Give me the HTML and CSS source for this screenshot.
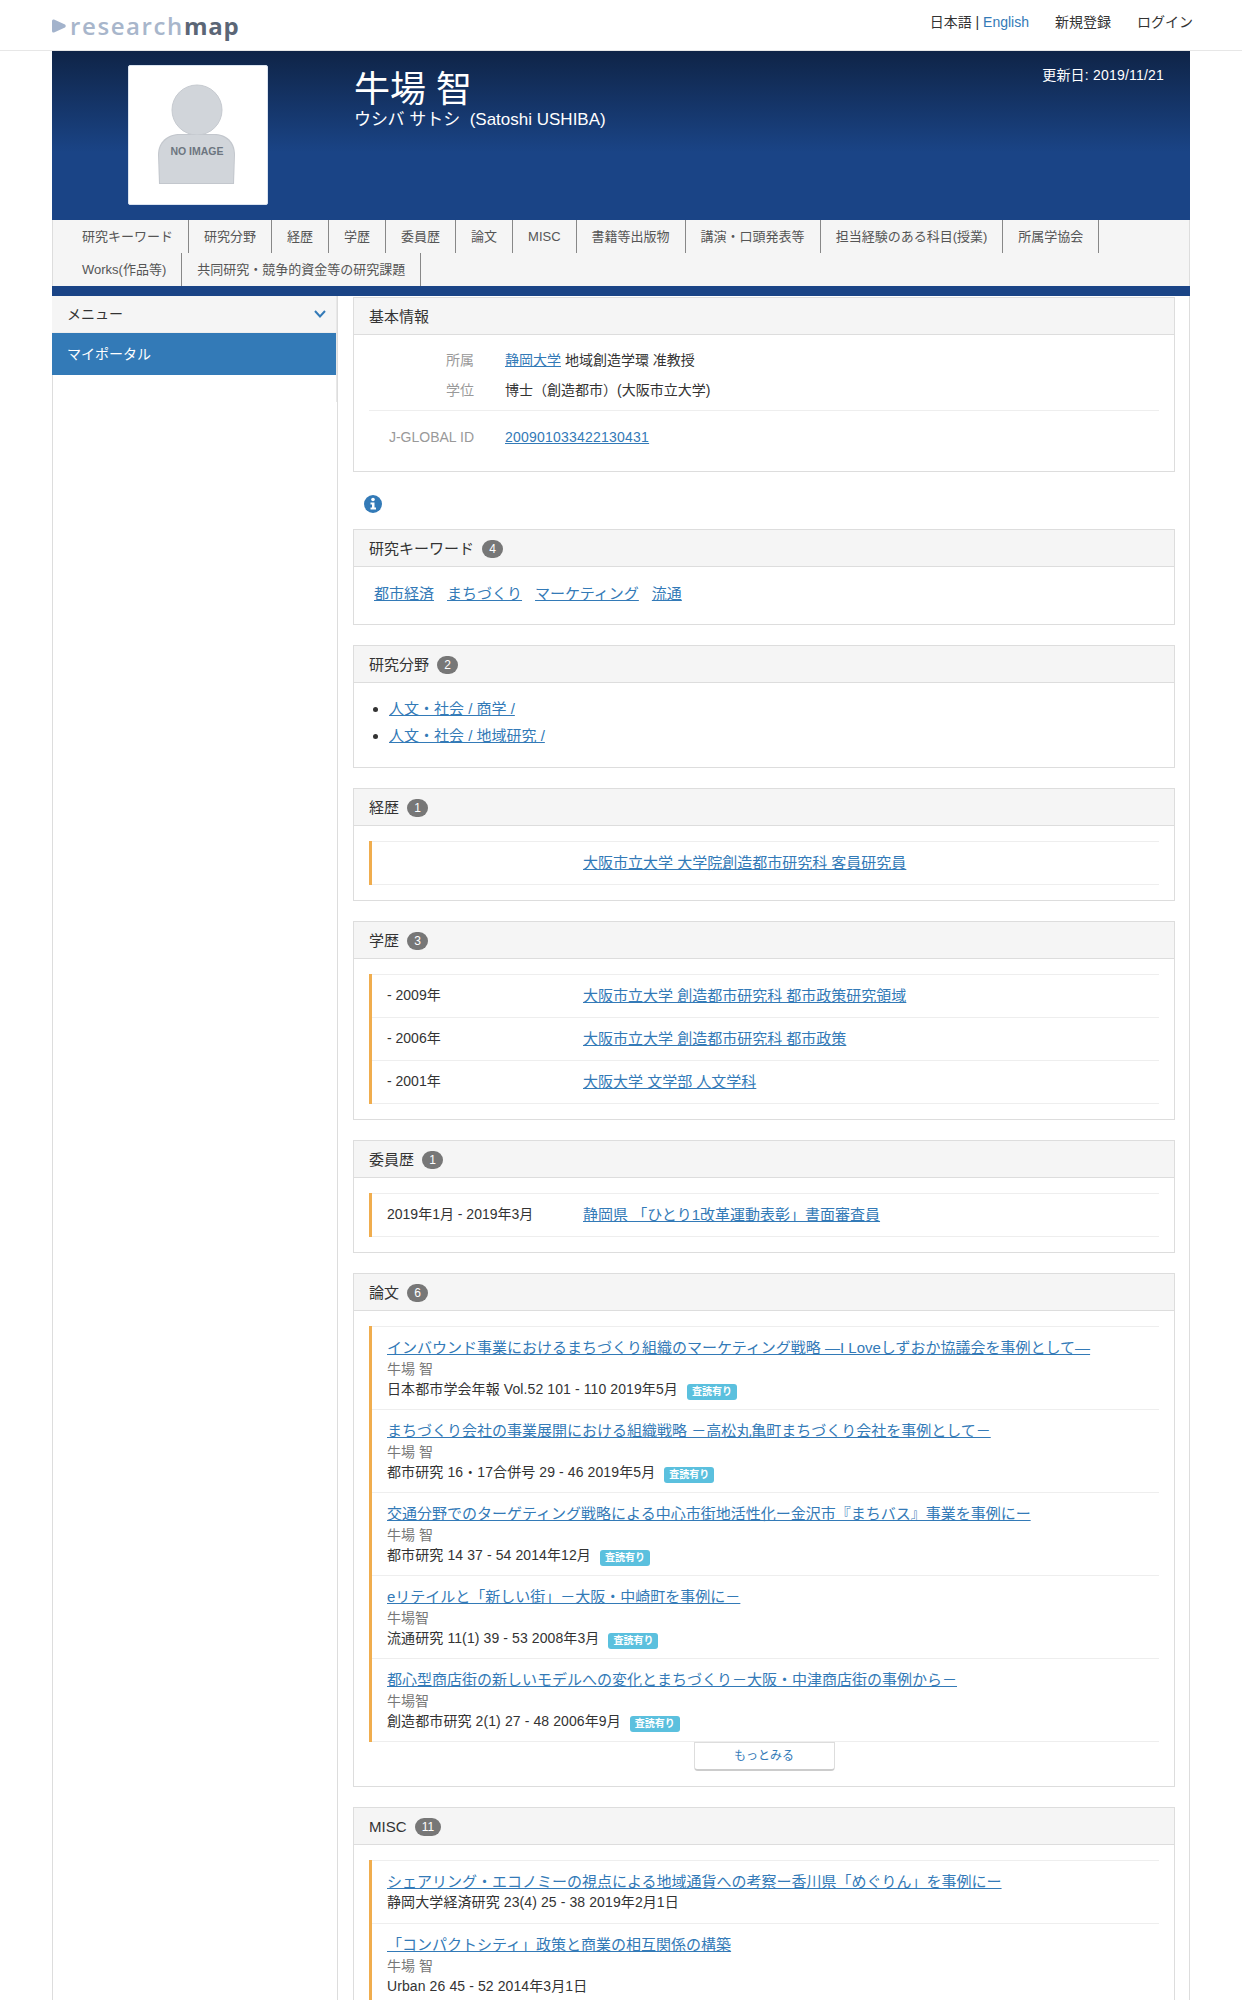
FILE: index.html
```html
<!DOCTYPE html>
<html lang="ja">
<head>
<meta charset="utf-8">
<title>牛場 智 - researchmap</title>
<link rel="stylesheet" href="styles.css">
</head>
<body>
<header class="topbar">
  <a class="logo" href="#">
    <svg class="logo-mark" width="14" height="14" viewBox="0 0 14 14"><path d="M2 0.5 L13 5.5 Q14.5 7 13 8.500 L2 13.500 Q0 14 0 12 V2 Q0 0 2 0.500 Z" fill="#a3b3cc"/></svg>
    <span class="logo-light">research</span><span class="logo-dark">map</span>
  </a>
  <nav class="topnav">
    <span>日本語 | <a href="#">English</a></span>
    <span>新規登録</span>
    <span>ログイン</span>
  </nav>
</header>
<div class="wrap">
  <section class="hero">
    <div class="photo">
      <svg width="138" height="138" viewBox="0 0 138 138">
        <path class="sil" d="M30 118 L29 89 C29 75 39 68 51 68 H85 C97 68 106 75 106 89 L105 118 Z"/>
        <circle class="sil-head" cx="68" cy="44" r="25"/>
        <path class="sil-fill" d="M31 117 L30 89 C30 76 40 69 51 69 H85 C96 69 105 76 105 89 L104 117 Z"/>
        <text x="68" y="89" class="noimg" text-anchor="middle">NO IMAGE</text>
      </svg>
    </div>
    <div class="names">
      <h1>牛場 智</h1>
      <p>ウシバ サトシ&nbsp; (Satoshi USHIBA)</p>
    </div>
    <div class="updated">更新日: 2019/11/21</div>
  </section>
  <ul class="tabs">
    <li>研究キーワード</li><li>研究分野</li><li>経歴</li><li>学歴</li><li>委員歴</li><li>論文</li><li>MISC</li><li>書籍等出版物</li><li>講演・口頭発表等</li><li>担当経験のある科目(授業)</li><li>所属学協会</li><li>Works(作品等)</li><li>共同研究・競争的資金等の研究課題</li>
  </ul>
  <div class="bluebar"></div>
  <div class="columns">
    <aside class="side">
      <div class="side-inner">
        <div class="side-head">メニュー
          <svg width="12" height="8" viewBox="0 0 12 8"><path d="M1 1 L6 6.500 L11 1" fill="none" stroke="#337ab7" stroke-width="2"/></svg>
        </div>
        <div class="side-active">マイポータル</div>
      </div>
    </aside>
    <main class="main">
      <section class="panel">
        <h2 class="panel-head">基本情報</h2>
        <div class="info">
          <dl class="info-grid">
            <dt>所属</dt><dd><a href="#">静岡大学</a> 地域創造学環 准教授</dd>
            <dt>学位</dt><dd>博士（創造都市）(大阪市立大学)</dd>
          </dl>
          <dl class="info-grid info-ruled">
            <dt>J-GLOBAL ID</dt><dd><a class="jglobal" href="#">200901033422130431</a></dd>
          </dl>
        </div>
      </section>
      <div class="info-icon">
        <svg width="18" height="18" viewBox="0 0 18 18"><circle cx="9" cy="9" r="9" fill="#337ab7"/><circle cx="9" cy="4.500" r="1.800" fill="#fff"/><path d="M6.500 7.500 H10.500 V12.500 H12 V14.500 H6.500 V12.500 H8 V9.500 H6.500 Z" fill="#fff"/></svg>
      </div>
      <section class="panel">
        <h2 class="panel-head">研究キーワード <span class="badge">4</span></h2>
        <div class="keywords"><a href="#">都市経済</a><a href="#">まちづくり</a><a href="#">マーケティング</a><a href="#">流通</a></div>
      </section>
      <section class="panel">
        <h2 class="panel-head">研究分野 <span class="badge">2</span></h2>
        <ul class="fields">
          <li><a href="#">人文・社会 / 商学 /</a></li>
          <li><a href="#">人文・社会 / 地域研究 /</a></li>
        </ul>
      </section>
      <section class="panel">
        <h2 class="panel-head">経歴 <span class="badge">1</span></h2>
        <div class="body">
          <ul class="list">
            <li class="row"><span></span><a href="#">大阪市立大学 大学院創造都市研究科 客員研究員</a></li>
          </ul>
        </div>
      </section>
      <section class="panel">
        <h2 class="panel-head">学歴 <span class="badge">3</span></h2>
        <div class="body">
          <ul class="list">
            <li class="row"><span>- 2009年</span><a href="#">大阪市立大学 創造都市研究科 都市政策研究領域</a></li>
            <li class="row"><span>- 2006年</span><a href="#">大阪市立大学 創造都市研究科 都市政策</a></li>
            <li class="row"><span>- 2001年</span><a href="#">大阪大学 文学部 人文学科</a></li>
          </ul>
        </div>
      </section>
      <section class="panel">
        <h2 class="panel-head">委員歴 <span class="badge">1</span></h2>
        <div class="body">
          <ul class="list">
            <li class="row"><span>2019年1月 - 2019年3月</span><a href="#">静岡県 「ひとり1改革運動表彰」書面審査員</a></li>
          </ul>
        </div>
      </section>
      <section class="panel">
        <h2 class="panel-head">論文 <span class="badge">6</span></h2>
        <div class="body">
          <ul class="list">
            <li class="paper"><a href="#">インバウンド事業におけるまちづくり組織のマーケティング戦略 —I Loveしずおか協議会を事例として—</a><p class="author">牛場 智</p><p class="source">日本都市学会年報 Vol.52 101 - 110 2019年5月<span class="peer">査読有り</span></p></li>
            <li class="paper"><a href="#">まちづくり会社の事業展開における組織戦略 －高松丸亀町まちづくり会社を事例として－</a><p class="author">牛場 智</p><p class="source">都市研究 16・17合併号 29 - 46 2019年5月<span class="peer">査読有り</span></p></li>
            <li class="paper"><a href="#">交通分野でのターゲティング戦略による中心市街地活性化ー金沢市『まちバス』事業を事例にー</a><p class="author">牛場 智</p><p class="source">都市研究 14 37 - 54 2014年12月<span class="peer">査読有り</span></p></li>
            <li class="paper"><a href="#">eリテイルと「新しい街」－大阪・中崎町を事例に－</a><p class="author">牛場智</p><p class="source">流通研究 11(1) 39 - 53 2008年3月<span class="peer">査読有り</span></p></li>
            <li class="paper"><a href="#">都心型商店街の新しいモデルへの変化とまちづくり－大阪・中津商店街の事例から－</a><p class="author">牛場智</p><p class="source">創造都市研究 2(1) 27 - 48 2006年9月<span class="peer">査読有り</span></p></li>
          </ul>
          <a class="more" href="#">もっとみる</a>
        </div>
      </section>
      <section class="panel">
        <h2 class="panel-head">MISC <span class="badge">11</span></h2>
        <div class="body">
          <ul class="list">
            <li class="paper"><a href="#">シェアリング・エコノミーの視点による地域通貨への考察ー香川県「めぐりん」を事例にー</a><p class="source">静岡大学経済研究 23(4) 25 - 38 2019年2月1日</p></li>
            <li class="paper"><a href="#">「コンパクトシティ」政策と商業の相互関係の構築</a><p class="author">牛場 智</p><p class="source">Urban 26 45 - 52 2014年3月1日</p></li>
          </ul>
        </div>
      </section>
    </main>
  </div>
</div>
</body>
</html>
```

FILE: styles.css
```css
* { box-sizing: border-box; }
html, body { height: 2000px; overflow: hidden; }
body {
  margin: 0;
  font-family: "Liberation Sans", "Noto Sans CJK JP", sans-serif;
  font-size: 14px;
  line-height: 20px;
  color: #333;
  background: #fff;
}
a { color: #337ab7; }
p, h1, h2, ul, dl, dd { margin: 0; padding: 0; }
ul { list-style: none; }

.topbar {
  height: 51px;
  border-bottom: 1px solid #e7e7e7;
  padding: 0 49px 0 52px;
  display: flex;
  justify-content: space-between;
}
.logo {
  display: flex;
  align-items: center;
  height: 51px;
  text-decoration: none;
  font-family: "Open Sans", sans-serif;
  font-size: 24px;
  font-weight: 600;
  letter-spacing: 1.6px;
}
.logo-mark { margin-right: 4px; }
.logo-light { color: #a8b6cb; }
.logo-dark { color: #5b6676; font-weight: 700; letter-spacing: 0.8px; }
.topnav { display: flex; gap: 26px; padding-top: 12px; }
.topnav a { text-decoration: none; }

.wrap { width: 1138px; margin-left: 52px; }

.hero {
  height: 169px;
  display: flex;
  padding: 14px 26px 0 76px;
  background: linear-gradient(#0f2447 0, #1a4486 60%, #1a4486 100%);
  color: #fff;
}
.photo {
  width: 140px;
  height: 140px;
  background: #fff;
  border: 1px solid #dbe4f0;
  border-radius: 2px;
}
.sil { fill: #c3c7cd; }
.sil-head { fill: #d1d5da; stroke: #c6cad0; stroke-width: 1px; }
.sil-fill { fill: #d1d5da; }
.noimg { font-size: 10.500px; font-weight: 700; fill: #6d7580; }
.names { margin-left: 86px; flex: 1; padding-top: 3px; }
.names h1 { font-size: 36px; line-height: 44px; font-weight: 400; }
.names p { font-size: 17px; line-height: 22px; margin-top: -3px; }
.updated { letter-spacing: 0.2px; }

.tabs {
  display: flex;
  flex-wrap: wrap;
  background: #f5f5f5;
  padding-left: 14px;
  height: 66px;
  font-size: 13px;
  line-height: 33px;
  color: #555;
  border-left: 1px solid #ddd;
  border-right: 1px solid #ddd;
}
.tabs li { padding: 0 15px; border-right: 1px solid #888; height: 33px; }

.bluebar { height: 10px; background: #1a4486; }

.columns {
  display: flex;
  height: 1704px;
  border-left: 1px solid #ddd;
  border-right: 1px solid #ddd;
}
.side { width: 284px; flex: none; }
.side-inner { height: 106px; margin-left: -1px; border-right: 1px solid #e8e8e8; }
.side-head {
  height: 37px;
  padding: 8px 10px 0 15px;
  background: #f5f5f5;
  display: flex;
  justify-content: space-between;
  border-bottom: 1px solid #eee;
}
.side-head svg { margin-top: 6px; }
.side-active { height: 42px; padding: 11px 15px; background: #337ab7; color: #fff; }

.main {
  flex: 1;
  border-left: 1px solid #ddd;
  padding: 1px 14px 0 15px;
}

.panel { border: 1px solid #ddd; margin-bottom: 20px; }
.panel-head {
  height: 37px;
  padding: 8px 15px 0;
  margin: 0;
  font-size: 15px;
  line-height: 21px;
  font-weight: 400;
  background: #f5f5f5;
  border-bottom: 1px solid #ddd;
}
.badge {
  display: inline-block;
  min-width: 10px;
  padding: 3px 7px;
  margin-left: 4px;
  font-size: 12px;
  line-height: 12px;
  color: #fff;
  background: #777;
  border-radius: 10px;
  vertical-align: 1px;
}

.info { height: 136px; padding: 10px 15px 0; }
.info-grid {
  display: grid;
  grid-template-columns: 105px 1fr;
  column-gap: 31px;
  grid-auto-rows: 30px;
  line-height: 30px;
}
.info-grid dt { text-align: right; color: #999; }
.info-ruled { margin-top: 5px; padding-top: 11px; border-top: 1px solid #eee; }
.jglobal { letter-spacing: 0.22px; }

.info-icon { height: 37px; padding: 23px 0 0 11px; margin-top: -20px; margin-bottom: 20px; }

.keywords { display: flex; gap: 13px; padding: 15px 20px 18px; font-size: 15px; line-height: 24px; }
.fields {
  list-style: disc;
  padding: 12px 15px 18px 35px;
  font-size: 15px;
  line-height: 27px;
}

.body { padding: 15px; }
.list { border-left: 3px solid #f0ad4e; }
.row {
  display: grid;
  grid-template-columns: 196px 1fr;
  height: 43px;
  padding: 0 0 0 15px;
  line-height: 42px;
  border-top: 1px solid #eee;
}
.row:last-child { height: 44px; border-bottom: 1px solid #eee; }
.row span { line-height: 40px; }
.row a { font-size: 15px; }
.paper {
  padding: 11px 0 9px 15px;
  border-top: 1px solid #eee;
}
.paper a { font-size: 15px; }
.paper:last-child { border-bottom: 1px solid #eee; }
.author { color: #777; margin-top: 1px; }
.source { letter-spacing: 0.1px; }
.paper a + .source { margin-bottom: 2px; }
.peer {
  display: inline-block;
  margin-left: 9px;
  padding: 3px 5px;
  font-size: 10px;
  line-height: 10px;
  font-weight: 700;
  letter-spacing: 0;
  color: #fff;
  background: #5bc0de;
  border-radius: 3px;
  vertical-align: -1px;
}
.more {
  display: block;
  width: 141px;
  height: 29px;
  margin: 0 auto;
  font-size: 12px;
  line-height: 26px;
  text-align: center;
  text-decoration: none;
  border: 1px solid #ddd;
  border-bottom: 2px solid #ccc;
  border-radius: 0 0 4px 4px;
}
```
